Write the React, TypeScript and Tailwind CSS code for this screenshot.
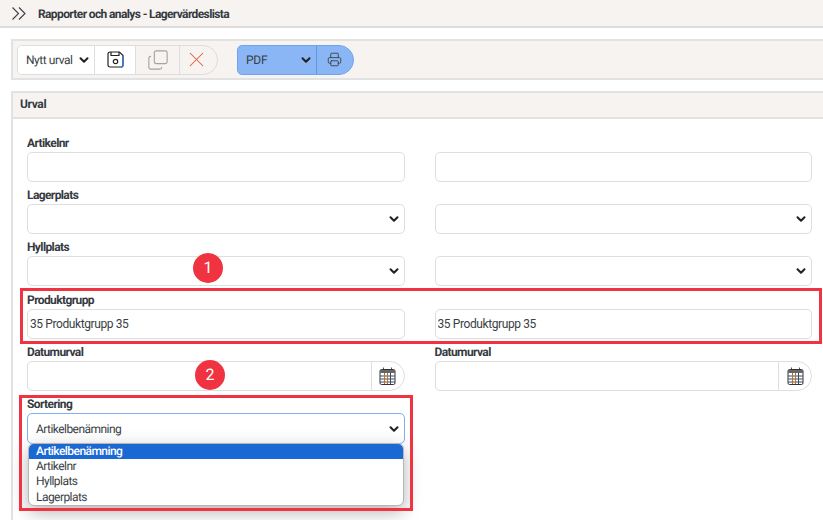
import { ChevronDown, Copy, Printer, X } from "lucide-react";

const font = "font-['Roboto',_'Liberation_Sans',_sans-serif]";

function Chevron({ className = "" }: { className?: string }) {
  return <ChevronDown size={14} strokeWidth={3.5} className={`shrink-0 text-[#222] ${className}`} />;
}

function SaveIcon() {
  return (
    <svg width="17" height="17" viewBox="0 0 17 17" fill="none" strokeWidth="1.2">
      <path d="M3 1h9.5L16 4.5V14a2 2 0 0 1-2 2H3a2 2 0 0 1-2-2V3a2 2 0 0 1 2-2Z" stroke="#222" />
      <path d="M4 1v3.5h8V1" stroke="#222" />
      <circle cx="8.5" cy="10.5" r="2.2" stroke="#222" />
      <path d="M15.9 5v9a2 2 0 0 1-2 2" stroke="#2b7bd6" />
    </svg>
  );
}

function CalendarIcon() {
  return (
    <svg width="17" height="18" viewBox="0 0 17 18" fill="none" strokeWidth="1">
      <path d="M4.5 0.5v3M12.5 0.5v3" stroke="#555" />
      <rect x="1" y="2.5" width="15" height="15" rx="1.5" stroke="#333" />
      <rect x="1" y="3" width="15" height="3" fill="#666" />
      <path d="M1 9h15M1 12h15M1 15h15" stroke="#3b4a63" />
      <path d="M5.5 6v11M8.5 6v11" stroke="#b5732d" />
      <path d="M11.5 6v11" stroke="#3b4a63" />
    </svg>
  );
}

function Label({ children }: { children?: string }) {
  return <div className="h-[22px] pt-[6px] text-[12px] leading-[14px] font-bold tracking-[-0.6px] text-[#343a40]">{children}</div>;
}

function TextField({ label, value = "" }: { label?: string; value?: string }) {
  return (
    <div>
      <Label>{label}</Label>
      <input
        readOnly
        value={value}
        className="block h-[30px] w-full rounded-[5px] border border-[#dedede] bg-white px-[2px] text-[12px] tracking-[-0.4px] text-[#3a3f45] outline-none"
      />
    </div>
  );
}

function SelectField({ label }: { label?: string }) {
  return (
    <div>
      <Label>{label}</Label>
      <div className="flex h-[30px] items-center justify-end rounded-[5px] border border-[#dedede] bg-white pr-[3px]">
        <Chevron />
      </div>
    </div>
  );
}

function DateField({ label }: { label: string }) {
  return (
    <div>
      <Label>{label}</Label>
      <div className="flex h-[30px] rounded-l-[5px] rounded-r-[15px] border border-[#dedede] bg-white">
        <div className="flex-1" />
        <div className="flex w-[33px] items-center justify-center border-l border-[#dedede]">
          <CalendarIcon />
        </div>
      </div>
    </div>
  );
}

function Badge({ n, className }: { n: number; className: string }) {
  return (
    <div className={`absolute flex h-[30px] w-[30px] items-center justify-center rounded-full bg-[#ef3340] text-[16px] text-white ${className}`}>
      {n}
    </div>
  );
}

export default function App() {
  const options = ["Artikelbenämning", "Artikelnr", "Hyllplats", "Lagerplats"];
  return (
    <div className={`relative h-[520px] w-[823px] overflow-hidden bg-white [text-rendering:geometricPrecision] ${font}`}>
      <div className="flex h-[28px] items-center border-b-2 border-[#dcdcdc] bg-[#f6f3f0] pl-[12px] pt-px">
        <svg width="14" height="13" viewBox="0 0 14 13" fill="none" stroke="#3a4048" strokeWidth="1.1">
          <path d="M0.5 0.5 6.5 6.5 0.5 12.5M7 0.5 13 6.5 7 12.5" />
        </svg>
        <div className="ml-[12px] text-[12px] font-bold tracking-[-0.62px] text-[#343a40]">Rapporter och analys - Lagervärdeslista</div>
      </div>

      <div className="ml-[11px] mt-[11px] flex h-[41px] items-center border-y-2 border-l-2 border-[#e2e2e2] bg-[#f6f3f0] pl-[4px]">
        <div className="flex h-[30px] w-[201px] overflow-hidden rounded-l-[5px] rounded-r-[15px] border border-[#dedede]">
          <div className="flex w-[76px] items-center justify-between bg-white pl-[8px] pr-[3px] text-[12px] tracking-[-0.45px] text-[#3a3f45]">
            Nytt urval
            <Chevron />
          </div>
          <div className="flex w-[41px] items-center justify-center border-l border-[#dedede] bg-white">
            <SaveIcon />
          </div>
          <div className="flex w-[44px] items-center justify-center border-l border-[#dedede]">
            <Copy size={22} strokeWidth={1.2} className="-scale-y-100 text-[#a3a3a3]" />
          </div>
          <div className="flex flex-1 items-center justify-center border-l border-[#dedede] pr-[4px]">
            <X size={25} strokeWidth={1} className="text-[#d9603f]" />
          </div>
        </div>
        <div className="ml-[19px] flex h-[30px] w-[117px] rounded-l-[5px] rounded-r-[15px] border border-[#6fa3f0] bg-[#8ab6f5]">
          <div className="flex w-[78px] items-center justify-between pl-[8px] pr-[3px] text-[12px] tracking-[-0.2px] text-[#3a3f45]">
            PDF
            <Chevron />
          </div>
          <div className="flex flex-1 items-center justify-center border-l border-[#5f95e6] pr-[2px]">
            <Printer size={15} strokeWidth={1.4} className="text-[#3a3f45]" />
          </div>
        </div>
      </div>

      <div className="ml-[11px] mt-[11px] h-[429px] border-l-2 border-[#e2e2e2]">
        <div className="-ml-[2px] flex h-[28px] items-center border-y-2 border-l-2 border-[#e2e2e2] bg-[#f6f3f0] pb-[2px] pl-[7px] text-[12px] font-bold tracking-[-0.35px] text-[#343a40]">
          Urval
        </div>
        <div className="grid w-[799px] grid-cols-2 gap-x-[30px] pl-[14px] pt-[11px]">
          <TextField label="Artikelnr" />
          <TextField />
          <SelectField label="Lagerplats" />
          <SelectField />
          <SelectField label="Hyllplats" />
          <SelectField />
          <div className="mt-px">
            <TextField label="Produktgrupp" value="35 Produktgrupp 35" />
          </div>
          <div className="mt-px">
            <TextField value="35 Produktgrupp 35" />
          </div>
          <DateField label="Datumurval" />
          <DateField label="Datumurval" />
          <div className="relative">
            <Label>Sortering</Label>
            <div className="flex h-[31px] items-center justify-between rounded-[5px] border border-[#7fb0ee] bg-white pl-[8px] pr-[3px] text-[12px] tracking-[-0.55px] text-[#3a3f45]">
              Artikelbenämning
              <Chevron />
            </div>
            <div className="absolute left-[1px] right-[1px] top-[52px] overflow-hidden rounded-[6px] border border-[#b5b5b5] bg-white text-[12px] leading-[15.2px] tracking-[-0.55px] text-[#3a3f45] shadow-[0_6px_18px_rgba(0,0,0,0.3)]">
              {options.map((o, i) => (
                <div key={o} className={i === 0 ? "bg-[#1a68d4] pl-[7px] font-medium text-white" : "pl-[7px]"}>
                  {o}
                </div>
              ))}
            </div>
          </div>
        </div>
      </div>

      <div className="absolute left-[20px] top-[288px] h-[56px] w-[802px] border-[3px] border-[#ef3340]" />
      <div className="absolute left-[19px] top-[395px] h-[116px] w-[394px] border-[3px] border-[#ef3340]" />
      <Badge n={1} className="left-[193px] top-[253px]" />
      <Badge n={2} className="left-[195px] top-[360px]" />
    </div>
  );
}
